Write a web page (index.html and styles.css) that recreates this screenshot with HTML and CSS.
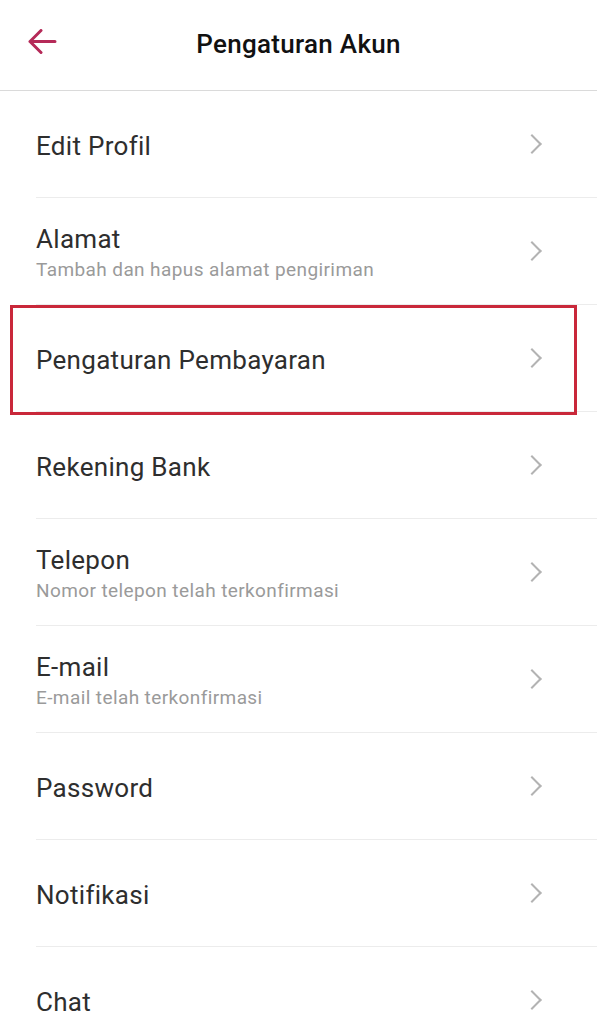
FILE: index.html
```html
<!DOCTYPE html>
<html lang="id">
<head>
<meta charset="utf-8">
<title>Pengaturan Akun</title>
<link rel="stylesheet" href="styles.css">
</head>
<body>
<header class="topbar">
  <button class="back" aria-label="Kembali">
    <svg width="30" height="28" viewBox="0 0 30 28"><path d="M28 12.5H3 M14 1.5 L3 12.5 L14 23.5" fill="none" stroke="#b52a58" stroke-width="3" stroke-linecap="round" stroke-linejoin="round"/></svg>
  </button>
  <h1 class="title">Pengaturan Akun</h1>
</header>
<ul class="menu">
  <li class="item"><div class="text"><div class="label">Edit Profil</div></div><span class="chev"></span></li>
  <li class="item"><div class="text"><div class="label">Alamat</div><div class="sub">Tambah dan hapus alamat pengiriman</div></div><span class="chev"></span></li>
  <li class="item highlighted"><div class="text"><div class="label">Pengaturan Pembayaran</div></div><span class="chev"></span></li>
  <li class="item"><div class="text"><div class="label">Rekening Bank</div></div><span class="chev"></span></li>
  <li class="item"><div class="text"><div class="label">Telepon</div><div class="sub">Nomor telepon telah terkonfirmasi</div></div><span class="chev"></span></li>
  <li class="item"><div class="text"><div class="label">E-mail</div><div class="sub">E-mail telah terkonfirmasi</div></div><span class="chev"></span></li>
  <li class="item"><div class="text"><div class="label">Password</div></div><span class="chev"></span></li>
  <li class="item"><div class="text"><div class="label">Notifikasi</div></div><span class="chev"></span></li>
  <li class="item"><div class="text"><div class="label">Chat</div></div><span class="chev"></span></li>
</ul>
</body>
</html>
```
FILE: styles.css
```css
* { box-sizing: border-box; }
html, body { margin: 0; padding: 0; background: #fff; }
body { font-family: Roboto, "Noto Sans", Arial, sans-serif; color: #333; width: 597px; overflow: hidden; }

.topbar {
  position: relative;
  height: 91px;
  border-bottom: 1px solid #dadada;
  display: flex;
  align-items: center;
  justify-content: center;
}
.back {
  position: absolute;
  left: 27px;
  top: 29px;
  padding: 0;
  border: 0;
  background: none;
  line-height: 0;
}
.title {
  margin: 0 0 2px 0;
  font-size: 26px;
  font-weight: 500;
  color: #111;
  letter-spacing: 0.3px;
}

.menu { list-style: none; margin: 0; padding: 0; }
.item {
  position: relative;
  margin-left: 36px;
  height: 107px;
  border-bottom: 1px solid #ececec;
  display: flex;
  align-items: center;
  justify-content: space-between;
  padding-right: 56px;
}
.text { display: flex; flex-direction: column; padding-top: 3px; }
.label { font-size: 26px; line-height: 30px; color: #2e2e2e; letter-spacing: 0.3px; }
.sub { font-size: 19px; line-height: 24px; margin-top: 4px; color: #9a9a9a; letter-spacing: 0.4px; }

.chev {
  width: 14px;
  height: 14px;
  border-top: 2.5px solid #b3b3b3;
  border-right: 2.5px solid #b3b3b3;
  transform: rotate(45deg);
  margin-right: 2px;
}

.highlighted::after {
  content: "";
  position: absolute;
  left: -26px;
  right: 20px;
  top: 0;
  bottom: -4px;
  border: 3px solid #c9283a;
  pointer-events: none;
}
```
